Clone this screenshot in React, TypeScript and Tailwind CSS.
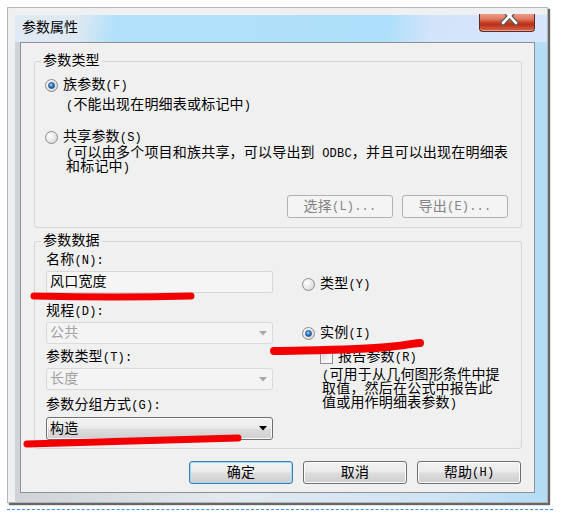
import React from "react";

// ascii bits (accelerators, dots) are rendered a bit smaller, like the half-width dialog font
const A = ({ children }: { children: React.ReactNode }) => (
  <span className="text-[12px] leading-none">{children}</span>
);

function Radio({ checked }: { checked?: boolean }) {
  return (
    <span className="flex h-[13px] w-[13px] shrink-0 items-center justify-center rounded-full border border-[#8c8c8c] bg-[radial-gradient(circle_at_35%_35%,#ffffff_0%,#e6e6e6_55%,#c9c9c9_100%)]">
      {checked && (
        <span className="h-[7px] w-[7px] rounded-full border border-[#1a4c8c] bg-[radial-gradient(circle_at_40%_35%,#a8dcff_0%,#2f86d8_45%,#0c3b80_100%)]" />
      )}
    </span>
  );
}

function Checkbox() {
  return (
    <span className="h-[13px] w-[13px] shrink-0 border border-[#8e8f8f] bg-[linear-gradient(135deg,#d6d6d6_0%,#f2f2f2_60%,#ffffff_100%)] shadow-[inset_0_0_0_1px_#f6f6f6]" />
  );
}

function Arrow({ disabled }: { disabled?: boolean }) {
  return (
    <svg width="8" height="5" viewBox="0 0 8 5">
      <path d="M0 0h8L4 4.5z" fill={disabled ? "#a8a8a8" : "#000"} />
    </svg>
  );
}

function Combo({ value, disabled }: { value: string; disabled?: boolean }) {
  if (disabled) {
    return (
      <div className="flex h-[22px] items-center justify-between rounded-[3px] border border-[#d9d9d9] bg-[#f4f4f4] pl-[3px] pr-[5px] text-[#a0a0a0]">
        <span>{value}</span>
        <Arrow disabled />
      </div>
    );
  }
  return (
    <div className="flex h-[23px] items-center justify-between rounded-[3px] border border-[#707070] bg-[linear-gradient(180deg,#f2f2f2_0%,#ebebeb_48%,#dddddd_52%,#cfcfcf_100%)] pl-[3px] pr-[5px] shadow-[inset_0_0_0_1px_#fafafa]">
      <span>{value}</span>
      <Arrow />
    </div>
  );
}

function Button({
  children,
  focus,
}: {
  children: React.ReactNode;
  focus?: boolean;
}) {
  if (focus) {
    return (
      <div className="flex h-[23px] w-[104px] items-center justify-center rounded-[3px] border border-[#3c7fb1] bg-[linear-gradient(180deg,#f2f2f2_0%,#ebebeb_48%,#dddddd_52%,#cfcfcf_100%)] shadow-[inset_0_0_0_1px_#9ed8f6]">
        {children}
      </div>
    );
  }
  return (
    <div className="flex h-[23px] w-[104px] items-center justify-center rounded-[3px] border border-[#707070] bg-[linear-gradient(180deg,#f2f2f2_0%,#ebebeb_48%,#dddddd_52%,#cfcfcf_100%)] shadow-[inset_0_0_0_1px_#fcfcfc]">
      {children}
    </div>
  );
}

function DisabledButton({ children }: { children: React.ReactNode }) {
  return (
    <div className="flex h-[23px] w-[106px] items-center justify-center rounded-[3px] border border-[#adb2b5] bg-[#f4f4f4] text-[#838383]">
      {children}
    </div>
  );
}

function CloseButton() {
  return (
    <div className="relative -mt-[1px] mr-[12px] h-[18px] w-[56px] overflow-hidden rounded-b-[4px] border border-t-0 border-[#5a2d26] bg-[linear-gradient(180deg,#ec9a85_0%,#e07a62_30%,#c63b20_52%,#b8321a_62%,#d8654a_100%)] shadow-[inset_0_-1px_0_#ee9a86]">
      <svg className="absolute left-0 top-0" width="56" height="18" viewBox="0 0 56 18">
        <path d="M23 -5L36 9M36 -5L23 9" stroke="#555" strokeWidth="5" strokeLinecap="round" />
        <path d="M23 -5L36 9M36 -5L23 9" stroke="#fff" strokeWidth="2.6" strokeLinecap="round" />
      </svg>
    </div>
  );
}

export default function App() {
  return (
    <div className="relative h-[515px] w-[562px] overflow-hidden bg-white pl-[7px] pt-[7px] font-['Liberation_Mono','Noto_Sans_CJK_SC',monospace] text-[14px] leading-[14px] tracking-[0.2px] text-black">
      {/* window frame */}
      <div className="h-[496px] w-[541px] border border-[#b4b6b8] bg-[#eef0f2] pl-[7px] pt-[7px] shadow-[2px_2px_1px_rgba(0,0,0,0.6)]">
        <div className="flex h-full flex-col bg-[linear-gradient(90deg,#cfd3d8_0%,#e3e9ef_40%,#cfe3f3_80%,#b3dcf6_100%)]">
          {/* title bar */}
          <div className="flex h-[27px] shrink-0 items-start justify-between bg-[linear-gradient(100deg,#dfe9f4_0%,#dfe9f4_12%,#b2e0fa_19%,#aee0fb_70%,#d3e3fa_78%,#d6e5fb_100%)]">
            <span className="pl-[7px] pt-[1px] font-['Noto_Sans_CJK_SC',sans-serif] text-[14px] leading-[20px] tracking-normal">
              参数属性
            </span>
            <CloseButton />
          </div>

          {/* client area */}
          <div className="ml-[5px] flex h-[451px] w-[515px] flex-col border border-[#8e9194] bg-[#f0f0f0]">
            <fieldset className="ml-[13px] mt-[11px] w-[488px] rounded-[3px] border border-[#d5d5d5] pb-[9px]">
              <legend className="ml-[6px] px-[2px] leading-[14px]">参数类型</legend>
              <div className="ml-[10px] mt-[10px] flex items-center gap-[5px]">
                <Radio checked />
                <span>
                  族参数<A>(F)</A>
                </span>
              </div>
              <div className="ml-[31px] mt-[6px]">
                <A>(</A>不能出现在明细表或标记中<A>)</A>
              </div>
              <div className="ml-[10px] mt-[18px] flex items-center gap-[5px]">
                <Radio />
                <span>
                  共享参数<A>(S)</A>
                </span>
              </div>
              <div className="ml-[31px] mt-[2px]">
                <A>(</A>可以由多个项目和族共享，可以导出到<A> ODBC</A>，并且可以出现在明细表
                <br />
                和标记中<A>)</A>
              </div>
              <div className="mt-[21px] flex justify-end gap-[9px] pr-[13px]">
                <DisabledButton>
                  选择<A>(L)...</A>
                </DisabledButton>
                <DisabledButton>
                  导出<A>(E)...</A>
                </DisabledButton>
              </div>
            </fieldset>

            <fieldset className="ml-[13px] mt-[6px] w-[488px] rounded-[3px] border border-[#d5d5d5] pb-[8px]">
              <legend className="ml-[6px] px-[2px] leading-[14px]">参数数据</legend>
              <div className="flex">
                <div className="ml-[11px] flex w-[227px] flex-col">
                  <div className="mt-[5px]">
                    名称<A>(N):</A>
                  </div>
                  <div className="mt-[4px] flex h-[22px] items-center rounded-[2px] border border-[#d7d7d7] bg-[#f5f5f5] pl-[3px]">
                    风口宽度
                  </div>
                  <div className="mt-[11px]">
                    规程<A>(D):</A>
                  </div>
                  <div className="mt-[4px]">
                    <Combo value="公共" disabled />
                  </div>
                  <div className="mt-[6px]">
                    参数类型<A>(T):</A>
                  </div>
                  <div className="mt-[4px]">
                    <Combo value="长度" disabled />
                  </div>
                  <div className="mt-[8px]">
                    参数分组方式<A>(G):</A>
                  </div>
                  <div className="mt-[5px]">
                    <Combo value="构造" />
                  </div>
                </div>

                <div className="ml-[29px] flex flex-col">
                  <div className="mt-[29px] flex items-center gap-[5px]">
                    <Radio />
                    <span>
                      类型<A>(Y)</A>
                    </span>
                  </div>
                  <div className="mt-[35px] flex items-center gap-[5px]">
                    <Radio checked />
                    <span>
                      实例<A>(I)</A>
                    </span>
                  </div>
                  <div className="ml-[18px] mt-[10px] flex items-center gap-[5px]">
                    <Checkbox />
                    <span>
                      报告参数<A>(R)</A>
                    </span>
                  </div>
                  <div className="ml-[20px] mt-[4px]">
                    <A>(</A>可用于从几何图形条件中提
                    <br />
                    取值，然后在公式中报告此
                    <br />
                    值或用作明细表参数<A>)</A>
                  </div>
                </div>
              </div>
            </fieldset>

            <div className="mt-[12px] flex justify-end gap-[10px] pr-[13px]">
              <Button focus>确定</Button>
              <Button>取消</Button>
              <Button>
                帮助<A>(H)</A>
              </Button>
            </div>
          </div>
        </div>
      </div>

      <div className="mt-[6px] w-[546px] border-t border-dashed border-[#3f8ee8]" />

      {/* red marker strokes drawn over the dialog */}
      <svg
        className="pointer-events-none absolute left-0 top-0"
        width="562"
        height="515"
        viewBox="0 0 562 515"
      >
        <g fill="none" stroke="#f20000" strokeLinecap="round" strokeLinejoin="round">
          <path d="M34 296C80 297 150 297 191 296" strokeWidth="7" />
          <path d="M274 351C320 350 360 350 388 347S414 343 420 343" strokeWidth="8" />
          <path d="M27 444C90 442 170 440 238 438" strokeWidth="7" />
        </g>
      </svg>
    </div>
  );
}
